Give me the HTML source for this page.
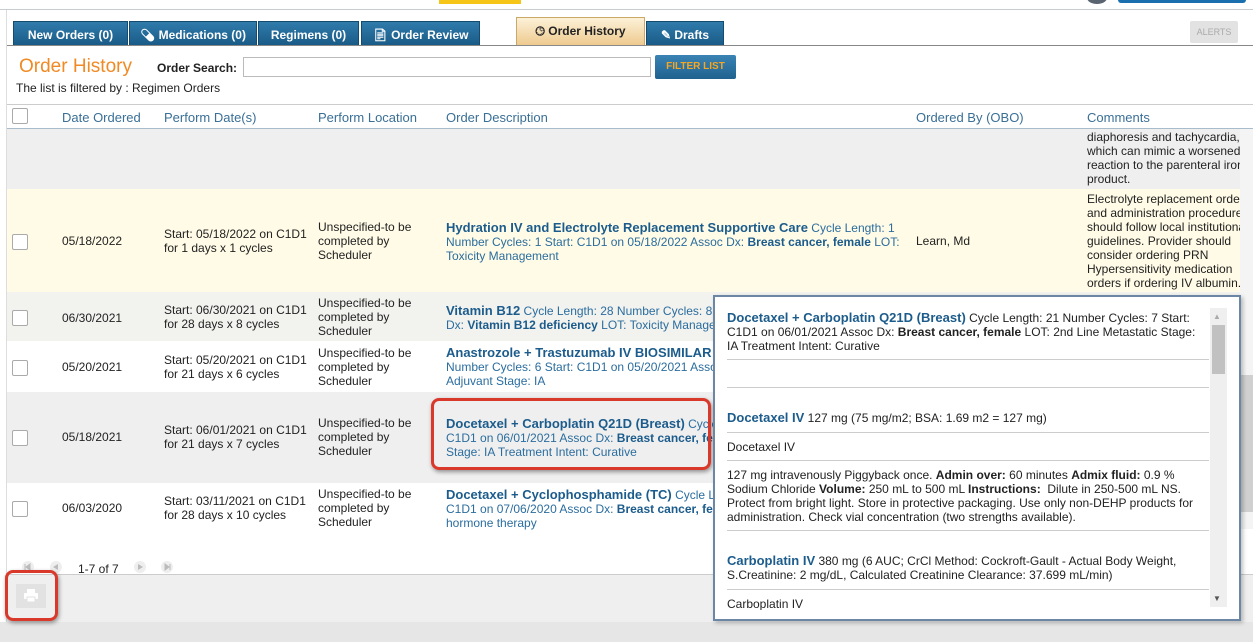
<!DOCTYPE html>
<html><head><meta charset="utf-8"><style>
*{box-sizing:border-box;margin:0;padding:0}
body{width:1253px;height:642px;overflow:hidden;background:#e6e6e6;font-family:"Liberation Sans",Arial,sans-serif;font-size:12px;color:#222;position:relative}
.a{position:absolute}
.tab{position:absolute;top:21px;height:25px;background:linear-gradient(#2f7bab,#195a86);color:#fff;font-size:12px;font-weight:bold;text-align:center;line-height:26px;border:1px solid #164b70;border-bottom:none}
.cb{position:absolute;left:12px;width:16px;height:16px;border:1px solid #aaa;border-radius:2px;background:#fff}
.hd{position:absolute;top:110px;color:#3a6f96;font-size:13px}
.t{position:absolute;font-size:12px;line-height:14px;color:#222}
.d{position:absolute;left:446px;font-size:12px;line-height:14px;color:#2b6d9e}
.d b{color:#1c5c8c;font-size:13px}
.d strong{color:#1c5c8c}
.pp{position:absolute;left:727px;width:482px;font-size:12px;line-height:14px;color:#222}
.pp b.l{color:#1c5c8c;font-size:13px}
.hr{position:absolute;left:727px;width:482px;height:1px;background:#ccc}
.cm{position:absolute;left:1087px;width:153px;overflow:hidden;white-space:nowrap;font-size:12px;line-height:14px;color:#222}
</style></head><body>
<div class="a" style="left:0;top:0;width:1253px;height:622px;background:#fff"></div>
<div class="a" style="left:0;top:9px;width:1253px;height:1px;background:#c8cdd2"></div>
<div class="a" style="left:439px;top:0;width:82px;height:4px;background:#f5c518"></div>
<div class="a" style="left:1087px;top:-8px;width:20px;height:12px;border-radius:50%;background:#5a6470"></div>
<div class="a" style="left:1118px;top:-4px;width:128px;height:7px;border-radius:3px;background:#1a6fae"></div>
<div class="a" style="left:6px;top:10px;width:1px;height:612px;background:#ddd"></div>

<div class="tab" style="left:13px;width:115px">New Orders (0)</div>
<div class="tab" style="left:129px;width:128px">&#x1F48A;&#xFE0E; Medications (0)</div>
<div class="tab" style="left:258px;width:101px">Regimens (0)</div>
<div class="tab" style="left:361px;width:119px">&#x1F4C4;&#xFE0E; Order Review</div>
<div class="tab" style="left:516px;top:17px;height:29px;width:129px;background:linear-gradient(#fcf1d8,#eec98c);color:#222;border-color:#c9a868;line-height:27px">&#x1F552;&#xFE0E; Order History</div>
<div class="tab" style="left:646px;width:78px">&#x270E; Drafts</div>
<div class="a" style="left:7px;top:45px;width:1246px;height:1px;background:#888"></div>
<div class="a" style="left:1190px;top:21px;width:48px;height:22px;background:#e2e2e2;border-radius:2px;color:#aaa;font-size:9px;text-align:center;line-height:22px">ALERTS</div>

<div class="a" style="left:19px;top:56px;color:#f08a24;font-size:19px">Order History</div>
<div class="a" style="left:157px;top:61px;font-weight:bold;font-size:12px">Order Search:</div>
<div class="a" style="left:243px;top:57px;width:408px;height:20px;border:1px solid #bbb;background:#fff"></div>
<div class="a" style="left:655px;top:55px;width:81px;height:24px;background:linear-gradient(#3a83b4,#1f628f);border-radius:2px;color:#f5a623;font-weight:bold;font-size:10px;text-align:center;line-height:24px">FILTER LIST</div>
<div class="a" style="left:16px;top:81px;font-size:12px">The list is filtered by : Regimen Orders</div>
<div class="a" style="left:7px;top:104px;width:1246px;height:1px;background:#ccc"></div>
<div class="cb" style="top:108px"></div>
<div class="hd" style="left:62px">Date Ordered</div>
<div class="hd" style="left:164px">Perform Date(s)</div>
<div class="hd" style="left:318px">Perform Location</div>
<div class="hd" style="left:446px">Order Description</div>
<div class="hd" style="left:916px">Ordered By (OBO)</div>
<div class="hd" style="left:1087px">Comments</div>
<div class="a" style="left:7px;top:128px;width:1246px;height:1px;background:#a9bccb"></div>

<div class="a" style="left:7px;top:129px;width:1233px;height:60px;background:#efefef"></div>
<div class="a" style="left:7px;top:189px;width:1233px;height:103px;background:#fffbe6"></div>
<div class="a" style="left:7px;top:292px;width:1233px;height:49px;background:#f2f2ef"></div>
<div class="a" style="left:7px;top:392px;width:1233px;height:91px;background:#efefef"></div>
<div class="cm" style="top:130px">diaphoresis and tachycardia,<br>which can mimic a worsened<br>reaction to the parenteral iron<br>product.</div>
<div class="cm" style="top:192px">Electrolyte replacement orders<br>and administration procedures<br>should follow local institutional<br>guidelines. Provider should<br>consider ordering PRN<br>Hypersensitivity medication<br>orders if ordering IV albumin.</div>

<div class="cb" style="top:234px"></div><div class="t" style="left:62px;top:234px">05/18/2022</div>
<div class="t" style="left:164px;top:227px">Start: 05/18/2022 on C1D1<br>for 1 days x 1 cycles</div>
<div class="t" style="left:318px;top:220px">Unspecified-to be<br>completed by<br>Scheduler</div>
<div class="d" style="top:221px;width:460px"><b>Hydration IV and Electrolyte Replacement Supportive Care</b> Cycle Length: 1 Number Cycles: 1 Start: C1D1 on 05/18/2022 Assoc Dx: <strong>Breast cancer, female</strong> LOT: Toxicity Management</div>
<div class="t" style="left:916px;top:234px">Learn, Md</div>

<div class="cb" style="top:310px"></div><div class="t" style="left:62px;top:311px">06/30/2021</div>
<div class="t" style="left:164px;top:303px">Start: 06/30/2021 on C1D1<br>for 28 days x 8 cycles</div>
<div class="t" style="left:318px;top:296px">Unspecified-to be<br>completed by<br>Scheduler</div>
<div class="d" style="top:304px;width:268px;white-space:nowrap;overflow:hidden"><b>Vitamin B12</b> Cycle Length: 28 Number Cycles: 8<br>Dx: <strong>Vitamin B12 deficiency</strong> LOT: Toxicity Management</div>

<div class="cb" style="top:360px"></div><div class="t" style="left:62px;top:360px">05/20/2021</div>
<div class="t" style="left:164px;top:353px">Start: 05/20/2021 on C1D1<br>for 21 days x 6 cycles</div>
<div class="t" style="left:318px;top:346px">Unspecified-to be<br>completed by<br>Scheduler</div>
<div class="d" style="top:346px;width:268px;white-space:nowrap;overflow:hidden"><b>Anastrozole + Trastuzumab IV BIOSIMILAR</b><br>Number Cycles: 6 Start: C1D1 on 05/20/2021 Assoc<br>Adjuvant Stage: IA</div>

<div class="cb" style="top:430px"></div><div class="t" style="left:62px;top:430px">05/18/2021</div>
<div class="t" style="left:164px;top:423px">Start: 06/01/2021 on C1D1<br>for 21 days x 7 cycles</div>
<div class="t" style="left:318px;top:416px">Unspecified-to be<br>completed by<br>Scheduler</div>
<div class="d" style="top:417px;width:268px;white-space:nowrap;overflow:hidden"><b>Docetaxel + Carboplatin Q21D (Breast)</b> Cycle<br>C1D1 on 06/01/2021 Assoc Dx: <strong>Breast cancer, fe</strong><br>Stage: IA Treatment Intent: Curative</div>
<div class="a" style="left:431px;top:398px;width:280px;height:72px;border:3px solid #d9392b;border-radius:8px;box-shadow:1px 2px 4px rgba(0,0,0,.4)"></div>

<div class="cb" style="top:501px"></div><div class="t" style="left:62px;top:501px">06/03/2020</div>
<div class="t" style="left:164px;top:494px">Start: 03/11/2021 on C1D1<br>for 28 days x 10 cycles</div>
<div class="t" style="left:318px;top:487px">Unspecified-to be<br>completed by<br>Scheduler</div>
<div class="d" style="top:488px;width:268px;white-space:nowrap;overflow:hidden"><b>Docetaxel + Cyclophosphamide (TC)</b> Cycle Le<br>C1D1 on 07/06/2020 Assoc Dx: <strong>Breast cancer, fe</strong><br>hormone therapy</div>

<svg class="a" style="left:20px;top:559px" width="160" height="16">
<circle cx="8" cy="8" r="6" fill="#eee"/><path d="M5 5v6M6 8l4-3v6z" fill="#bbb" stroke="#bbb"/>
<circle cx="36" cy="8" r="6" fill="#eee"/><path d="M33 8l5-3v6z" fill="#bbb"/>
<circle cx="120" cy="8" r="6" fill="#eee"/><path d="M123 8l-5-3v6z" fill="#bbb"/>
<circle cx="147" cy="8" r="6" fill="#eee"/><path d="M150 5v6M149 8l-4-3v6z" fill="#bbb" stroke="#bbb"/>
</svg>
<div class="t" style="left:78px;top:562px">1-7 of 7</div>
<div class="a" style="left:7px;top:574px;width:1246px;height:1px;background:#ccc"></div>
<div class="a" style="left:7px;top:575px;width:1246px;height:47px;background:#efefef"></div>
<div class="a" style="left:0;top:622px;width:1253px;height:20px;background:#e6e6e6"></div>
<div class="a" style="left:16px;top:584px;width:30px;height:24px;background:#e2e2e2"></div>
<svg class="a" style="left:23px;top:589px" width="16" height="14"><rect x="4" y="0" width="8" height="4" fill="#fff"/><rect x="1" y="4" width="14" height="6" rx="1" fill="#fff"/><rect x="4" y="8" width="8" height="5" fill="#fff" stroke="#e2e2e2"/></svg>
<div class="a" style="left:5px;top:570px;width:53px;height:51px;border:3px solid #d9392b;border-radius:8px;box-shadow:1px 2px 4px rgba(0,0,0,.4)"></div>

<div class="a" style="left:1240px;top:129px;width:13px;height:400px;background:#f4f4f4"></div>
<div class="a" style="left:1240px;top:375px;width:13px;height:137px;background:#d0d0d0"></div>

<div class="a" style="left:713px;top:295px;width:528px;height:326px;background:#fff;border:2px solid #6c86a6;box-shadow:2px 2px 4px rgba(0,0,0,.25)"></div>
<div class="a" style="left:1210px;top:308px;width:17px;height:299px;background:#efefef"></div>
<div class="a" style="left:1212px;top:325px;width:13px;height:49px;background:#c1c1c1"></div>
<div class="a" style="left:1213px;top:312px;font-size:8px;color:#aaa">&#x25B2;</div>
<div class="a" style="left:1213px;top:594px;font-size:8px;color:#555">&#x25BC;</div>
<div class="pp" style="top:311px"><b class="l">Docetaxel + Carboplatin Q21D (Breast)</b> Cycle Length: 21 Number Cycles: 7 Start: C1D1 on 06/01/2021 Assoc Dx: <b>Breast cancer, female</b> LOT: 2nd Line Metastatic Stage: IA Treatment Intent: Curative</div>
<div class="hr" style="top:359px"></div>
<div class="hr" style="top:387px"></div>
<div class="pp" style="top:411px"><b class="l">Docetaxel IV</b> 127 mg (75 mg/m2; BSA: 1.69 m2 = 127 mg)</div>
<div class="hr" style="top:432px"></div>
<div class="pp" style="top:440px">Docetaxel IV</div>
<div class="hr" style="top:460px"></div>
<div class="pp" style="top:468px">127 mg intravenously Piggyback once. <b>Admin over:</b> 60 minutes <b>Admix fluid:</b> 0.9 % Sodium Chloride <b>Volume:</b> 250 mL to 500 mL <b>Instructions:</b>&nbsp; Dilute in 250-500 mL NS. Protect from bright light. Store in protective packaging. Use only non-DEHP products for administration. Check vial concentration (two strengths available).</div>
<div class="hr" style="top:530px"></div>
<div class="pp" style="top:554px"><b class="l">Carboplatin IV</b> 380 mg (6 AUC; CrCl Method: Cockroft-Gault - Actual Body Weight, S.Creatinine: 2 mg/dL, Calculated Creatinine Clearance: 37.699 mL/min)</div>
<div class="hr" style="top:589px"></div>
<div class="pp" style="top:597px;height:13px;overflow:hidden">Carboplatin IV</div>
</body></html>
